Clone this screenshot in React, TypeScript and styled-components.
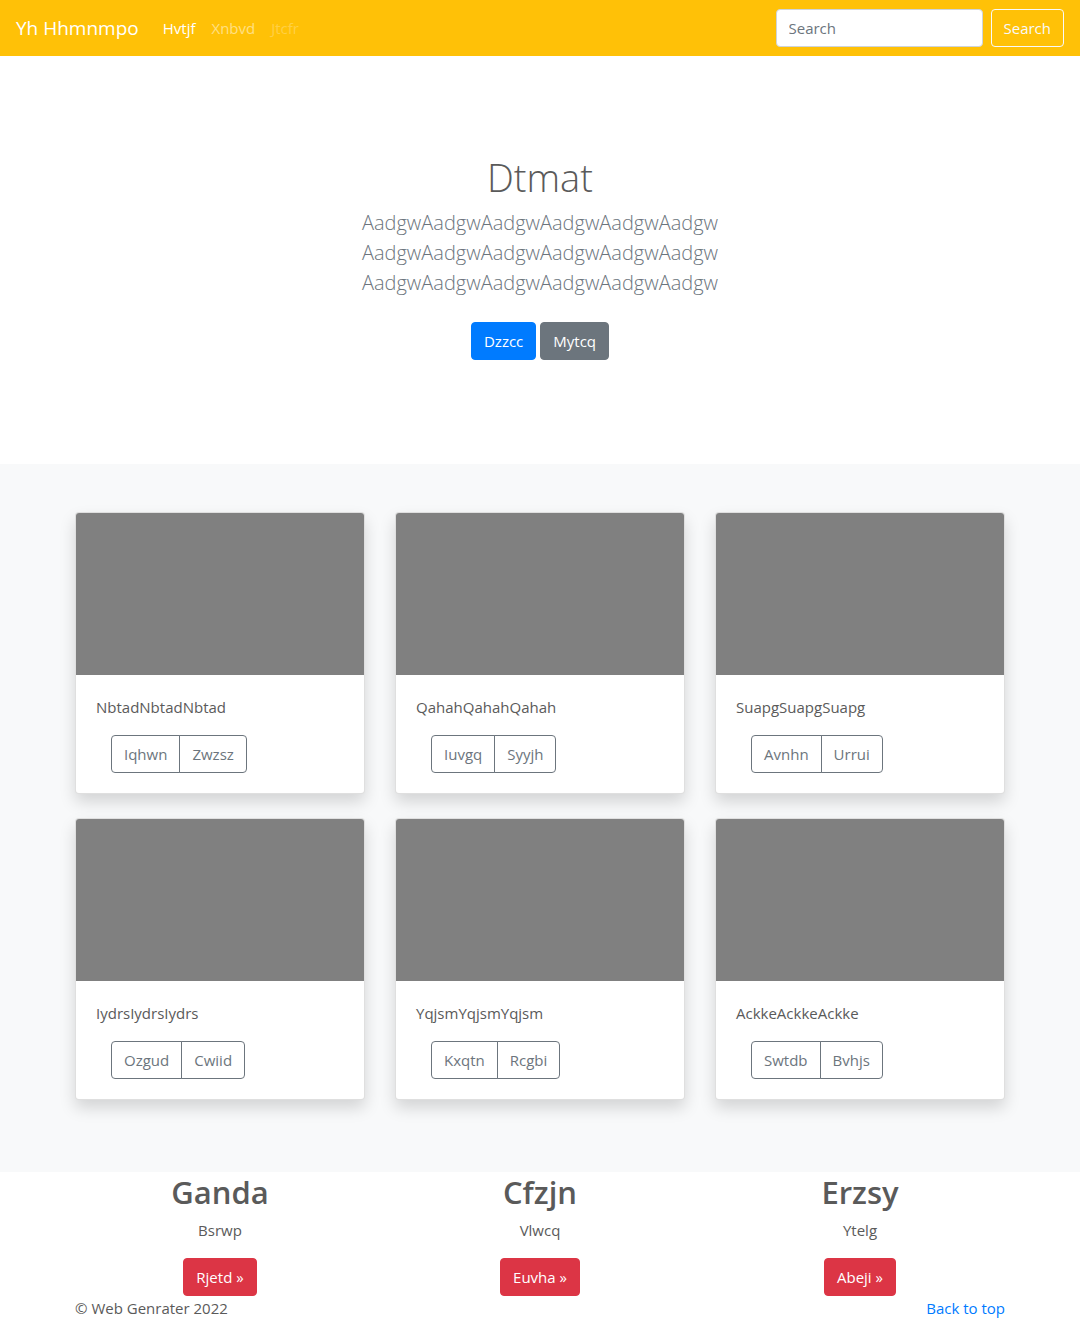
import React from "react";
import styled, { createGlobalStyle, css } from "styled-components";

const GlobalStyle = createGlobalStyle`
  *, *::before, *::after { box-sizing: border-box; }
  body {
    margin: 0;
    background: #fff;
    color: #5a5a5a;
    font-family: "Segoe UI", "Open Sans", "Noto Sans", sans-serif;
    font-size: 15px;
    line-height: 24px;
  }
`;

const Navbar = styled.nav`
  display: flex;
  align-items: center;
  padding: 9px 16px;
  background: #ffc107;
`;

const Brand = styled.a`
  margin-right: 16px;
  color: #fff;
  font-size: 19px;
  line-height: 30px;
  text-decoration: none;
`;

const NavList = styled.ul`
  display: flex;
  flex: 1;
  margin: 0;
  padding: 0;
  list-style: none;
`;

const NavLink = styled.a<{ $alpha: number }>`
  display: block;
  padding: 7px 8px;
  color: rgba(255, 255, 255, ${(p) => p.$alpha});
  text-decoration: none;
`;

const SearchForm = styled.form`
  display: flex;
  gap: 8px;
`;

const SearchInput = styled.input`
  width: 207px;
  height: 38px;
  padding: 6px 12px;
  border: 1px solid #ced4da;
  border-radius: 4px;
  background: #fff;
  color: #495057;
  font: inherit;
  &::placeholder { color: #6c757d; opacity: 1; }
`;

const tones = {
  light: css`border-color: #f8f9fa; background: transparent; color: #f8f9fa;`,
  primary: css`border-color: #007bff; background: #007bff; color: #fff;`,
  secondary: css`border-color: #6c757d; background: #6c757d; color: #fff;`,
  danger: css`border-color: #dc3545; background: #dc3545; color: #fff;`,
  outline: css`border-color: #6c757d; background: transparent; color: #6c757d;`,
};

const Button = styled.button<{ $tone: keyof typeof tones }>`
  height: 38px;
  padding: 0 12px;
  border: 1px solid;
  border-radius: 4px;
  font: inherit;
  cursor: pointer;
  ${(p) => tones[p.$tone]}
`;

const Hero = styled.section`
  padding: 96px 16px 104px;
  text-align: center;
`;

const HeroTitle = styled.h1`
  margin: 0 0 6px;
  font-size: 38px;
  font-weight: 300;
  line-height: 50px;
`;

const Lead = styled.p`
  margin: 0 0 24px;
  color: #6c757d;
  font-size: 20px;
  font-weight: 300;
  line-height: 30px;
`;

const HeroActions = styled.div`
  display: flex;
  justify-content: center;
  gap: 4px;
`;

const Album = styled.section`
  padding: 48px 0;
  background: #f8f9fa;
`;

const Container = styled.div`
  max-width: 960px;
  margin: 0 auto;
  padding: 0 15px;
`;

const CardGrid = styled.div`
  display: grid;
  grid-template-columns: repeat(3, 1fr);
  gap: 24px 30px;
  padding-bottom: 24px;
`;

const Card = styled.article`
  overflow: hidden;
  border: 1px solid rgba(0, 0, 0, 0.125);
  border-radius: 4px;
  background: #fff;
  box-shadow: 0 8px 16px rgba(0, 0, 0, 0.15);
`;

const Thumbnail = styled.div`
  height: 162px;
  background: #808080;
`;

const CardBody = styled.div`
  padding: 20px;
`;

const CardText = styled.p`
  margin: 0 0 16px;
`;

const ButtonGroup = styled.div`
  display: flex;
  padding: 0 15px;
  & > button:first-child { border-radius: 4px 0 0 4px; }
  & > button:last-child { margin-left: -1px; border-radius: 0 4px 4px 0; }
`;

const Features = styled.div`
  display: grid;
  grid-template-columns: repeat(3, 1fr);
  gap: 30px;
`;

const Feature = styled.section`
  text-align: center;
`;

const FeatureTitle = styled.h2`
  margin: 0 0 6px;
  font-size: 31px;
  font-weight: 600;
  line-height: 40px;
`;

const FeatureText = styled.p`
  margin: 0 0 16px;
`;

const Footer = styled.footer`
  display: flex;
  justify-content: space-between;
`;

const TopLink = styled.a`
  color: #007bff;
  text-decoration: none;
`;

const links = [
  { label: "Hvtjf", alpha: 1 },
  { label: "Xnbvd", alpha: 0.5 },
  { label: "Jtcfr", alpha: 0.25 },
];

const cards = [
  { text: "NbtadNbtadNbtad", actions: ["Iqhwn", "Zwzsz"] },
  { text: "QahahQahahQahah", actions: ["Iuvgq", "Syyjh"] },
  { text: "SuapgSuapgSuapg", actions: ["Avnhn", "Urrui"] },
  { text: "IydrsIydrsIydrs", actions: ["Ozgud", "Cwiid"] },
  { text: "YqjsmYqjsmYqjsm", actions: ["Kxqtn", "Rcgbi"] },
  { text: "AckkeAckkeAckke", actions: ["Swtdb", "Bvhjs"] },
];

const features = [
  { title: "Ganda", text: "Bsrwp", action: "Rjetd »" },
  { title: "Cfzjn", text: "Vlwcq", action: "Euvha »" },
  { title: "Erzsy", text: "Ytelg", action: "Abeji »" },
];

export default function App() {
  return (
    <>
      <GlobalStyle />
      <Navbar>
        <Brand href="#">Yh Hhmnmpo</Brand>
        <NavList>
          {links.map((link) => (
            <li key={link.label}>
              <NavLink href="#" $alpha={link.alpha}>{link.label}</NavLink>
            </li>
          ))}
        </NavList>
        <SearchForm onSubmit={(e) => e.preventDefault()}>
          <SearchInput type="search" placeholder="Search" aria-label="Search" />
          <Button type="submit" $tone="light">Search</Button>
        </SearchForm>
      </Navbar>
      <main>
        <Hero>
          <HeroTitle>Dtmat</HeroTitle>
          <Lead>
            AadgwAadgwAadgwAadgwAadgwAadgw<br />
            AadgwAadgwAadgwAadgwAadgwAadgw<br />
            AadgwAadgwAadgwAadgwAadgwAadgw
          </Lead>
          <HeroActions>
            <Button type="button" $tone="primary">Dzzcc</Button>
            <Button type="button" $tone="secondary">Mytcq</Button>
          </HeroActions>
        </Hero>
        <Album>
          <Container>
            <CardGrid>
              {cards.map((card) => (
                <Card key={card.text}>
                  <Thumbnail />
                  <CardBody>
                    <CardText>{card.text}</CardText>
                    <ButtonGroup>
                      {card.actions.map((action) => (
                        <Button key={action} type="button" $tone="outline">{action}</Button>
                      ))}
                    </ButtonGroup>
                  </CardBody>
                </Card>
              ))}
            </CardGrid>
          </Container>
        </Album>
        <Container>
          <Features>
            {features.map((feature) => (
              <Feature key={feature.title}>
                <FeatureTitle>{feature.title}</FeatureTitle>
                <FeatureText>{feature.text}</FeatureText>
                <Button type="button" $tone="danger">{feature.action}</Button>
              </Feature>
            ))}
          </Features>
        </Container>
      </main>
      <Container>
        <Footer>
          <span>© Web Genrater 2022</span>
          <TopLink href="#">Back to top</TopLink>
        </Footer>
      </Container>
    </>
  );
}
